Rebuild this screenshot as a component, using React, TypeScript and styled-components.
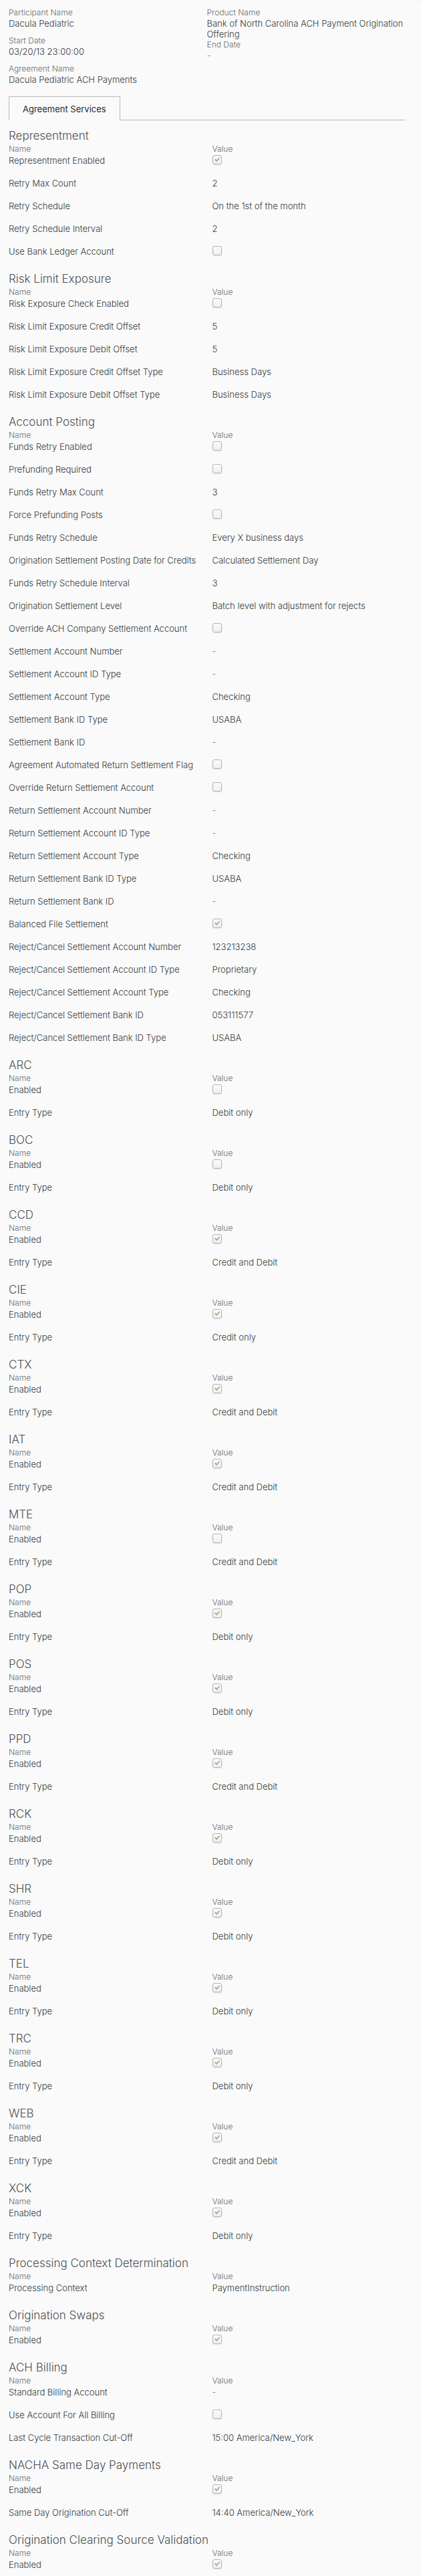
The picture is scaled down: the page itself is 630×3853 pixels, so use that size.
import React from "react";
import styled, { createGlobalStyle } from "styled-components";

const GlobalStyle = createGlobalStyle`
  *, *::before, *::after { box-sizing: border-box; }
  body {
    margin: 0;
    background: #fafafa;
    color: #32393c;
    font-family: Inter, "Open Sans", sans-serif;
    font-size: 13px;
    font-weight: 300;
    line-height: 16px;
  }
`;

const Page = styled.main`
  position: relative;
  padding: 11px 24px 9px 13px;
`;

const CornerMark = styled.div`
  position: absolute;
  top: 0;
  right: 0;
  width: 11px;
  height: 1px;
  background: #efefef;
`;

const Summary = styled.div`
  display: grid;
  grid-template-columns: 1fr 1fr;
  align-items: start;
`;

const FieldList = styled.dl`
  margin: 0;
`;

const Field = styled.div`
  min-height: 42px;
`;

const FieldLabel = styled.dt`
  font-size: 12px;
  color: #666c6e;
`;

const FieldValue = styled.dd<{ $empty?: boolean }>`
  margin: 0;
  color: ${(p) => (p.$empty ? "#7d8284" : "inherit")};
`;

const TabBar = styled.div`
  display: flex;
  margin: 7px 0 11px;

  &::after {
    content: "";
    flex: 1;
    border-bottom: 1px solid #b9b9b9;
  }
`;

const Tab = styled.button`
  height: 36px;
  padding: 0 20px;
  border: 1px solid #b9b9b9;
  border-bottom: 0;
  background: transparent;
  color: #1f2a30;
  font: inherit;
  font-weight: 400;
`;

const Section = styled.section`
  margin-bottom: 4px;

  &:last-child {
    margin-bottom: 0;
  }

  &:last-child tr:last-child > * {
    padding-bottom: 0;
  }
`;

const SectionTitle = styled.h2`
  margin: 0;
  font-size: 17px;
  font-weight: 300;
  line-height: 24px;
  color: #4c5052;
`;

const PropertyTable = styled.table`
  width: 100%;
  table-layout: fixed;
  border-collapse: collapse;
`;

const ColumnHeading = styled.th`
  padding: 0;
  font-size: 12px;
  font-weight: 300;
  text-align: left;
  color: #666c6e;

  &:last-child {
    padding-left: 8px;
  }
`;

const NameCell = styled.th`
  padding: 0 0 16px;
  font-weight: 300;
  line-height: 18px;
  text-align: left;
  vertical-align: top;
`;

const ValueCell = styled.td<{ $empty?: boolean }>`
  padding: 0 0 16px 8px;
  line-height: 18px;
  vertical-align: top;
  color: ${(p) => (p.$empty ? "#7d8284" : "inherit")};
`;

const CheckFrame = styled.span`
  display: grid;
  width: 14px;
  height: 18px;
  padding-bottom: 2px;
  place-items: center;

  > * {
    grid-area: 1 / 1;
  }
`;

const CheckInput = styled.input`
  appearance: none;
  width: 14px;
  height: 14px;
  margin: 0;
  border: 1px solid #b4b4b4;
  border-radius: 3px;
  background: linear-gradient(#fbfbfb, #efefef);
  box-shadow: 0 1px 2px rgba(0, 0, 0, 0.1);
`;

const CheckMark = styled.svg`
  width: 10px;
  height: 10px;
  pointer-events: none;
`;

type Value = string | boolean;
type Row = [name: string, value: Value];
type Group = { title: string; rows: Row[] };

const entryClass = (title: string, enabled: boolean, entryType: string): Group => ({
  title,
  rows: [
    ["Enabled", enabled],
    ["Entry Type", entryType],
  ],
});

const groups: Group[] = [
  {
    title: "Representment",
    rows: [
      ["Representment Enabled", true],
      ["Retry Max Count", "2"],
      ["Retry Schedule", "On the 1st of the month"],
      ["Retry Schedule Interval", "2"],
      ["Use Bank Ledger Account", false],
    ],
  },
  {
    title: "Risk Limit Exposure",
    rows: [
      ["Risk Exposure Check Enabled", false],
      ["Risk Limit Exposure Credit Offset", "5"],
      ["Risk Limit Exposure Debit Offset", "5"],
      ["Risk Limit Exposure Credit Offset Type", "Business Days"],
      ["Risk Limit Exposure Debit Offset Type", "Business Days"],
    ],
  },
  {
    title: "Account Posting",
    rows: [
      ["Funds Retry Enabled", false],
      ["Prefunding Required", false],
      ["Funds Retry Max Count", "3"],
      ["Force Prefunding Posts", false],
      ["Funds Retry Schedule", "Every X business days"],
      ["Origination Settlement Posting Date for Credits", "Calculated Settlement Day"],
      ["Funds Retry Schedule Interval", "3"],
      ["Origination Settlement Level", "Batch level with adjustment for rejects"],
      ["Override ACH Company Settlement Account", false],
      ["Settlement Account Number", "-"],
      ["Settlement Account ID Type", "-"],
      ["Settlement Account Type", "Checking"],
      ["Settlement Bank ID Type", "USABA"],
      ["Settlement Bank ID", "-"],
      ["Agreement Automated Return Settlement Flag", false],
      ["Override Return Settlement Account", false],
      ["Return Settlement Account Number", "-"],
      ["Return Settlement Account ID Type", "-"],
      ["Return Settlement Account Type", "Checking"],
      ["Return Settlement Bank ID Type", "USABA"],
      ["Return Settlement Bank ID", "-"],
      ["Balanced File Settlement", true],
      ["Reject/Cancel Settlement Account Number", "123213238"],
      ["Reject/Cancel Settlement Account ID Type", "Proprietary"],
      ["Reject/Cancel Settlement Account Type", "Checking"],
      ["Reject/Cancel Settlement Bank ID", "053111577"],
      ["Reject/Cancel Settlement Bank ID Type", "USABA"],
    ],
  },
  entryClass("ARC", false, "Debit only"),
  entryClass("BOC", false, "Debit only"),
  entryClass("CCD", true, "Credit and Debit"),
  entryClass("CIE", true, "Credit only"),
  entryClass("CTX", true, "Credit and Debit"),
  entryClass("IAT", true, "Credit and Debit"),
  entryClass("MTE", false, "Credit and Debit"),
  entryClass("POP", true, "Debit only"),
  entryClass("POS", true, "Debit only"),
  entryClass("PPD", true, "Credit and Debit"),
  entryClass("RCK", true, "Debit only"),
  entryClass("SHR", true, "Debit only"),
  entryClass("TEL", true, "Debit only"),
  entryClass("TRC", true, "Debit only"),
  entryClass("WEB", true, "Credit and Debit"),
  entryClass("XCK", true, "Debit only"),
  {
    title: "Processing Context Determination",
    rows: [["Processing Context", "PaymentInstruction"]],
  },
  { title: "Origination Swaps", rows: [["Enabled", true]] },
  {
    title: "ACH Billing",
    rows: [
      ["Standard Billing Account", "-"],
      ["Use Account For All Billing", false],
      ["Last Cycle Transaction Cut-Off", "15:00 America/New_York"],
    ],
  },
  {
    title: "NACHA Same Day Payments",
    rows: [
      ["Enabled", true],
      ["Same Day Origination Cut-Off", "14:40 America/New_York"],
    ],
  },
  { title: "Origination Clearing Source Validation", rows: [["Enabled", true]] },
];

const summaryColumns: [string, string][][] = [
  [
    ["Participant Name", "Dacula Pediatric"],
    ["Start Date", "03/20/13 23:00:00"],
    ["Agreement Name", "Dacula Pediatric ACH Payments"],
  ],
  [
    ["Product Name", "Bank of North Carolina ACH Payment Origination Offering"],
    ["End Date", "-"],
  ],
];

function Check({ id, checked }: { id: string; checked: boolean }) {
  return (
    <CheckFrame>
      <CheckInput id={id} type="checkbox" checked={checked} disabled readOnly />
      {checked && (
        <CheckMark viewBox="0 0 10 10" aria-hidden="true">
          <path d="M1 4.9 2.5 3.6 4.2 5.3 8.3 1.3 9.3 2.6 4.3 8.2Z" fill="#9dba7f" />
        </CheckMark>
      )}
    </CheckFrame>
  );
}

function PropertyRow({ id, name, value }: { id: string; name: string; value: Value }) {
  if (typeof value === "boolean") {
    return (
      <tr>
        <NameCell scope="row">
          <label htmlFor={id}>{name}</label>
        </NameCell>
        <ValueCell>
          <Check id={id} checked={value} />
        </ValueCell>
      </tr>
    );
  }
  return (
    <tr>
      <NameCell scope="row">{name}</NameCell>
      <ValueCell $empty={value === "-"}>{value}</ValueCell>
    </tr>
  );
}

function PropertySection({ group, index }: { group: Group; index: number }) {
  const titleId = `group-${index}`;
  return (
    <Section>
      <SectionTitle id={titleId}>{group.title}</SectionTitle>
      <PropertyTable aria-labelledby={titleId}>
        <thead>
          <tr>
            <ColumnHeading scope="col">Name</ColumnHeading>
            <ColumnHeading scope="col">Value</ColumnHeading>
          </tr>
        </thead>
        <tbody>
          {group.rows.map(([name, value], row) => (
            <PropertyRow key={name} id={`${titleId}-${row}`} name={name} value={value} />
          ))}
        </tbody>
      </PropertyTable>
    </Section>
  );
}

export default function App() {
  return (
    <>
      <GlobalStyle />
      <Page>
        <CornerMark />
        <Summary>
          {summaryColumns.map((fields, column) => (
            <FieldList key={column}>
              {fields.map(([label, value]) => (
                <Field key={label}>
                  <FieldLabel>{label}</FieldLabel>
                  <FieldValue $empty={value === "-"}>{value}</FieldValue>
                </Field>
              ))}
            </FieldList>
          ))}
        </Summary>
        <TabBar role="tablist">
          <Tab type="button" role="tab" id="tab-services" aria-selected="true" aria-controls="panel-services">
            Agreement Services
          </Tab>
        </TabBar>
        <div id="panel-services" role="tabpanel" aria-labelledby="tab-services">
          {groups.map((group, index) => (
            <PropertySection key={group.title} group={group} index={index} />
          ))}
        </div>
      </Page>
    </>
  );
}
